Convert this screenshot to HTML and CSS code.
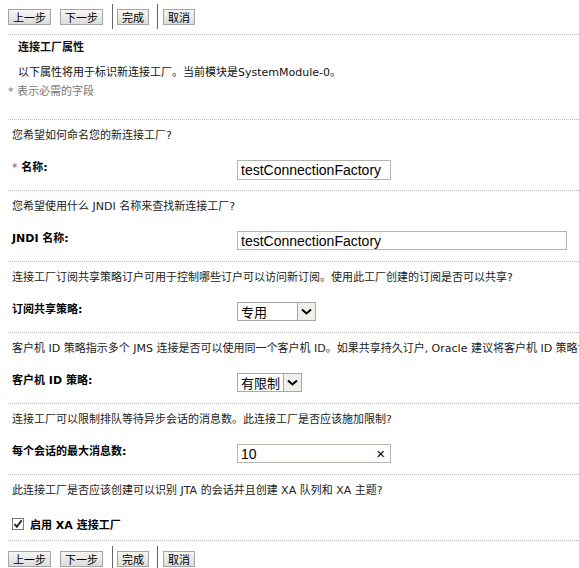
FILE: index.html
```html
<!DOCTYPE html>
<html lang="zh-CN">
<head>
<meta charset="utf-8">
<title>连接工厂属性</title>
<link rel="stylesheet" href="styles.css">
</head>
<body>
<div class="page">
  <div class="toolbar">
    <button class="btn">上一步</button>
    <button class="btn">下一步</button>
    <span class="vsep"></span>
    <button class="btn">完成</button>
    <span class="vsep vsep-b"></span>
    <button class="btn">取消</button>
  </div>

  <div class="header">
    <div class="title">连接工厂属性</div>
    <div class="desc">以下属性将用于标识新连接工厂。当前模块是SystemModule-0。</div>
    <div class="note">* 表示必需的字段</div>
  </div>

  <div class="section">
    <div class="question">您希望如何命名您的新连接工厂?</div>
    <div class="row">
      <div class="label"><span class="req">*</span> 名称:</div>
      <input class="field field-s" type="text" value="testConnectionFactory">
    </div>
  </div>

  <div class="section">
    <div class="question">您希望使用什么 JNDI 名称来查找新连接工厂?</div>
    <div class="row">
      <div class="label">JNDI 名称:</div>
      <input class="field field-l" type="text" value="testConnectionFactory">
    </div>
  </div>

  <div class="section">
    <div class="question">连接工厂订阅共享策略订户可用于控制哪些订户可以访问新订阅。使用此工厂创建的订阅是否可以共享?</div>
    <div class="row">
      <div class="label">订阅共享策略:</div>
      <div class="select select-a">
        <span class="select-text">专用</span>
        <span class="select-btn"><svg width="11" height="7" viewBox="0 0 11 7"><path d="M1 1.5 L5.5 5.5 L10 1.5" fill="none" stroke="#000" stroke-width="2"/></svg></span>
      </div>
    </div>
  </div>

  <div class="section">
    <div class="question">客户机 ID 策略指示多个 JMS 连接是否可以使用同一个客户机 ID。如果共享持久订户, Oracle 建议将客户机 ID 策略设置为不受限制。</div>
    <div class="row">
      <div class="label">客户机 ID 策略:</div>
      <div class="select select-b">
        <span class="select-text">有限制</span>
        <span class="select-btn"><svg width="11" height="7" viewBox="0 0 11 7"><path d="M1 1.5 L5.5 5.5 L10 1.5" fill="none" stroke="#000" stroke-width="2"/></svg></span>
      </div>
    </div>
  </div>

  <div class="section">
    <div class="question">连接工厂可以限制排队等待异步会话的消息数。此连接工厂是否应该施加限制?</div>
    <div class="row">
      <div class="label">每个会话的最大消息数:</div>
      <div class="field field-s clear-field">
        <span>10</span>
        <span class="clear">×</span>
      </div>
    </div>
  </div>

  <div class="section section-last">
    <div class="question">此连接工厂是否应该创建可以识别 JTA 的会话并且创建 XA 队列和 XA 主题?</div>
    <div class="check-row">
      <span class="checkbox"><svg width="11" height="10" viewBox="0 0 11 10"><path d="M1.5 5 L4.2 8 L9.5 1" fill="none" stroke="#222" stroke-width="2"/></svg></span>
      <span class="check-label">启用 XA 连接工厂</span>
    </div>
  </div>

  <div class="toolbar toolbar-bottom">
    <button class="btn">上一步</button>
    <button class="btn">下一步</button>
    <span class="vsep"></span>
    <button class="btn">完成</button>
    <span class="vsep vsep-b"></span>
    <button class="btn">取消</button>
  </div>
</div>
</body>
</html>
```

FILE: styles.css
```css
html, body {
  margin: 0;
  padding: 0;
  background: #fff;
  overflow: hidden;
}

.page {
  width: 579px;
  font-family: "DejaVu Sans", "Noto Sans CJK SC", sans-serif;
  font-size: 11px;
  color: #111;
  white-space: nowrap;
}

.toolbar {
  display: flex;
  align-items: flex-start;
  height: 34px;
  padding-left: 8px;
}

.toolbar-bottom {
  border-top: 1px dotted #b8b8b8;
  margin-left: 8px;
  padding-left: 0;
  padding-top: 1px;
}

.btn {
  margin-top: 9px;
  height: 16px;
  padding: 0 4px;
  border: 1px solid #a4a4a4;
  background: linear-gradient(#f6f6f4, #dddcd8);
  font-family: "Noto Sans CJK SC", sans-serif;
  font-size: 11px;
  line-height: 14px;
  color: #000;
  margin-right: 9px;
}

.vsep {
  margin-top: 4px;
  width: 1px;
  height: 25px;
  background: #666;
  margin-right: 4px;
}

.vsep-b {
  margin-left: -1px;
  margin-right: 5px;
}

.header {
  border-top: 1px dotted #b8b8b8;
  margin-left: 8px;
  padding: 5px 0 20px;
}

.title {
  font-weight: bold;
  line-height: 15px;
  padding-left: 10px;
}

.desc {
  line-height: 15px;
  padding-left: 10px;
  margin-top: 10px;
}

.note {
  line-height: 15px;
  margin-top: 4px;
  color: #777;
}

.section {
  border-top: 1px dotted #b8b8b8;
  margin-left: 8px;
  padding: 8px 0 10px 4px;
}

.question {
  line-height: 15px;
  color: #222;
}

.row {
  display: grid;
  grid-template-columns: 225px auto;
  margin-top: 17px;
  height: 20px;
}

.label {
  font-weight: bold;
  line-height: 15px;
  color: #000;
}

.req {
  color: #666;
  font-weight: normal;
}

.field {
  box-sizing: border-box;
  height: 20px;
  border: 1px solid #b5b5b0;
  padding: 0 3px;
  font-family: "Liberation Sans", Arial, sans-serif;
  font-size: 14px;
  color: #000;
  background: #fff;
  outline: none;
  margin: 0;
}

.field-s {
  width: 154px;
}

.field-l {
  width: 330px;
  height: 19px;
}

.clear-field {
  display: flex;
  align-items: center;
  justify-content: space-between;
  height: 19px;
}

.clear {
  font-size: 15px;
  padding-right: 2px;
}

.select {
  box-sizing: border-box;
  display: flex;
  align-items: stretch;
  height: 19px;
  border: 1px solid #a8a8a8;
  background: #fff;
}

.select-a {
  width: 79px;
}

.select-b {
  width: 65px;
}

.select-text {
  flex: 1;
  font-family: "Noto Sans CJK SC", sans-serif;
  font-size: 13px;
  line-height: 17px;
  padding-left: 3px;
  color: #000;
}

.select-btn {
  width: 17px;
  border-left: 1px solid #a8a8a8;
  background: #efefec;
  display: flex;
  align-items: center;
  justify-content: center;
}

.section-last {
  padding-bottom: 10px;
}

.check-row {
  display: flex;
  align-items: center;
  margin-top: 19px;
  height: 13px;
}

.checkbox {
  box-sizing: border-box;
  width: 12px;
  height: 12px;
  border: 1px solid #7a7a7a;
  display: flex;
  align-items: center;
  justify-content: center;
  background: #fff;
}

.check-label {
  font-weight: bold;
  margin-left: 6px;
  color: #000;
}
```
